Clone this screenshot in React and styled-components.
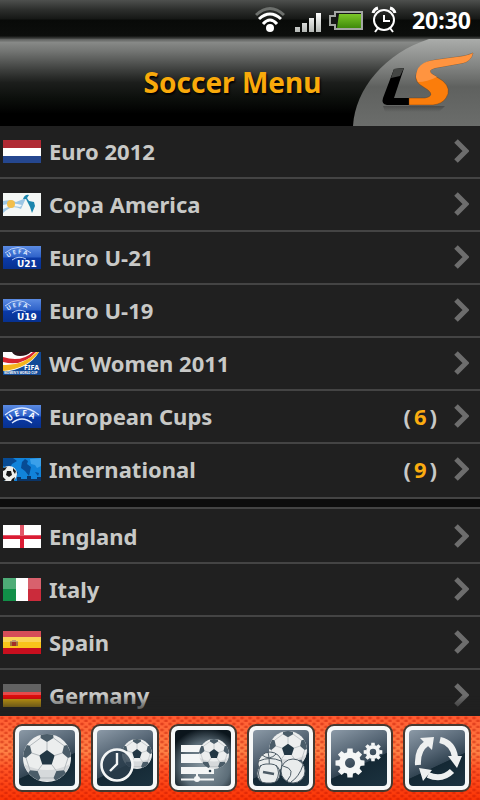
import React from 'react';
import styled, { createGlobalStyle } from 'styled-components';

const GlobalStyle = createGlobalStyle`
  * {
    box-sizing: border-box;
  }

  body {
    margin: 0;
    background: #202020;
    font-family: "Noto Sans", "Open Sans", sans-serif;
    font-weight: 700;
  }
`

const Screen = styled.div`
  display: flex;
  flex-direction: column;
  height: 100vh;
  overflow: hidden;
`

const StatusBar = styled.div`
  flex: none;
  display: flex;
  align-items: center;
  justify-content: flex-end;
  height: 39px;
  padding-right: 9px;
  background: linear-gradient(#4e504e, #2c2e2c 25%, #161816 48%, #080a08 52%, #0c0e0c 92%, #4a4c4a);
  color: white;
  font-size: 23px;
  line-height: 38px;

  svg {
    display: block;
    margin-right: 12px;
  }
`

const Header = styled.header`
  flex: none;
  display: grid;
  grid-template-columns: 112px 1fr 127px;
  align-items: center;
  height: 87px;
  background: linear-gradient(#5c5e5c, #878987 4%, #737573 14%, #3c3e3c 36%, #1c1e1c 50%, #0c0f0c 68%, #000 86%);

  h1 {
    grid-column: 2;
    margin: 0;
    padding-bottom: 2px;
    color: #f9aa0b;
    font-size: 28px;
    line-height: 40px;
    text-align: center;
    white-space: nowrap;
    text-shadow: 1px 2px 2px black;
  }

  svg {
    display: block;
  }
`

const List = styled.main`
  flex: 1;
  min-height: 0;
  overflow-y: auto;
  scrollbar-width: none;
  background: #202020;
  mask-image: linear-gradient(black calc(100% - 20px), transparent);
`

const Section = styled.nav`
  padding: ${ p => p.$second ? '2px 0 0' : '0 0 2px' };
  border-top: ${ p => p.$second ? '2px solid #444' : '0' };
  border-bottom: ${ p => p.$second ? '0' : '2px solid #444' };
`

const Divider = styled.div`
  height: 8px;
  background: #0d0d0d;
`

const Row = styled.a`
  display: flex;
  align-items: center;
  height: 53px;
  padding: 0 11px 0 3px;
  border-bottom: 2px solid #444;
  color: #c8c9c7;
  font-size: 22px;
  line-height: 30px;
  text-decoration: none;

  &:last-child {
    height: 51px;
    border-bottom: 0;
  }

  svg {
    flex: none;
    display: block;
  }
`

const RowLabel = styled.span`
  flex: 1;
  padding: 0 0 2px 8px;
`

const Count = styled.span`
  display: flex;
  gap: 3px;
  margin-right: 16px;
  padding-bottom: 2px;

  b {
    color: #fbac10;
    font-weight: 700;
  }
`

const TabBar = styled.footer`
  flex: none;
  display: grid;
  grid-template-columns: repeat(6, 1fr);
  align-items: center;
  justify-items: center;
  height: 84px;
  padding: 0 4px 0 8px;
  background:
    radial-gradient(ellipse 3px 2px at 2px 2px, rgba(190, 20, 0, .6), transparent) 0 0 / 8px 6px,
    radial-gradient(ellipse 3px 2px at 6px 5px, rgba(190, 20, 0, .6), transparent) 0 0 / 8px 6px,
    linear-gradient(#ff5a30, #ff8246 42%, #ff5526 62%, #fb3405);
`

const TabButton = styled.button`
  width: 68px;
  height: 68px;
  padding: 0;
  overflow: hidden;
  border: 2px solid #46382f;
  border-radius: 9px;
  background: #f6f8f8;

  svg {
    display: block;
    margin: 4px;
    border-radius: 4px;
    background: ${ p => p.$active
      ? 'radial-gradient(circle at 55% 65%, #8b9aa3, #5c6d78 50%, #0b151c 80%)'
      : 'linear-gradient(155deg, #8c9aa7, #566675 38%, #334553 59%, #142834 60%, #1c3340)' };
  }
`

const polar = (r, deg) => {
  const a = deg * Math.PI / 180;
  return [r * Math.cos(a), r * Math.sin(a)].map(n => n.toFixed(2)).join(',');
}

const SoccerBall = ({ x, y, r }) => (
  <g transform={ `translate(${x} ${y}) scale(${r / 24})` }>
    <circle r="24" fill="#eceeee" />
    <path d="M-23,6 A24,24 0 0 0 23,6 Q0,18 -23,6" fill="#d6d9db" />
    { [0, 1, 2, 3, 4].map(k => {
      const a = k * 72 - 90;
      return (
        <g key={ k }>
          <path d={ `M${polar(8, a)} L${polar(16, a)} M${polar(21, a + 18)} L${polar(21, a + 54)}` } stroke="#b4babe" strokeWidth="1" />
          <path d={ `M${polar(16, a)} L${polar(21, a + 18)} L${polar(24, a + 15)} A24,24 0 0 0 ${polar(24, a - 15)} L${polar(21, a - 18)} Z` } fill="#4a5c68" />
        </g>
      )
    }) }
    <polygon points={ [0, 1, 2, 3, 4].map(k => polar(8, k * 72 - 90)).join(' ') } fill="#223744" />
  </g>
)

const Gear = ({ x, y, r }) => (
  <g transform={ `translate(${x} ${y}) scale(${r / 14})` }>
    <circle r="8" fill="none" stroke="#f4f6f6" strokeWidth="6" />
    { [0, 45, 90, 135, 180, 225, 270, 315].map(a => (
      <path key={ a } d="M-3,-10 L-2.6,-14.5 H2.6 L3,-10 Z" fill="#f4f6f6" transform={ `rotate(${a})` } />
    )) }
  </g>
)

const tabs = [
  { name: 'Soccer', art: <SoccerBall x={ 28 } y={ 28 } r={ 24 } /> },
  { name: 'Upcoming', art: <>
    <SoccerBall x={ 40 } y={ 24 } r={ 15 } />
    <circle cx="20" cy="35" r="15.5" fill="#2c3f4d" fillOpacity=".8" stroke="#f4f6f6" strokeWidth="2.6" />
    <path d="M20,23 V34 L13,41" fill="none" stroke="#f4f6f6" strokeWidth="2.4" />
  </> },
  { name: 'Leagues', active: true, art: <>
    <path d="M6,15 H30 V22 H6 Z M6,24 H32 V33 H6 Z M6,37 H39 V44 H6 Z M6,48.5 H39 V50.5 H6 Z M21,44 H23 V47 H21 Z" fill="#f4f6f6" />
    <circle cx="22" cy="49" r="3" fill="#f4f6f6" />
    <SoccerBall x={ 39 } y={ 24 } r={ 15 } />
    <circle cx="35" cy="41" r="1.3" fill="#2c3f4d" />
  </> },
  { name: 'Sports', art: <>
    <SoccerBall x={ 35 } y={ 20 } r={ 19 } />
    <g fill="#e9ecec" stroke="#4c5b65">
      <circle cx="17" cy="34" r="12" />
      <path d="M6,31 Q17,26 28,31 M15,22 Q18,33 14,46 M9,25 Q17,31 23,24" fill="none" />
      <circle cx="40" cy="41" r="12" />
      <path d="M30,36 Q44,39 34,51 M50,35 Q46,47 38,52" fill="none" />
      <rect x="4" y="34" width="23" height="19" rx="9" />
      <path d="M8,35 Q3,43 8,51 M23,35 Q28,43 23,51" fill="none" />
      <path d="M10,42 L21,44" strokeWidth="2.4" />
    </g>
  </> },
  { name: 'Settings', art: <>
    <Gear x={ 19 } y={ 33 } r={ 14 } />
    <Gear x={ 42 } y={ 22 } r={ 9 } />
  </> },
  { name: 'Refresh', art: <>
    <g fill="none" stroke="#eef0f0" strokeWidth="6">
      <path d="M9,35 Q8,20 18,13" />
      <path d="M31,10 Q44,13 46,27" />
      <path d="M43,41 Q33,51 19,45" />
    </g>
    <path d="M11,8 L25,7 L23,20 Z M39,26 L53,26 L48,38 Z M23,40 L10,38 L14,51 Z" fill="#eef0f0" />
  </> },
]

const Gloss = () => <rect width="38" height="11" fill="white" opacity=".26" />

const UefaBack = ({ id }) => <>
  <defs>
    <linearGradient id={ id } x2="0" y2="1">
      <stop offset="0" stopColor="#5b8be2" />
      <stop offset=".48" stopColor="#2e62c9" />
      <stop offset=".52" stopColor="#0b3aa8" />
      <stop offset="1" stopColor="#07318f" />
    </linearGradient>
  </defs>
  <rect width="38" height="23" fill={ `url(#${id})` } />
</>

const UefaSmall = ({ id, text }) => <>
  <UefaBack id={ id } />
  <path d="M2,7 Q15,-4 28,7 M9,14 Q16,9 23,13" fill="none" stroke="#b9cff5" />
  <path id={ `${id}-arc` } d="M5,12 Q15,4 27,11" fill="none" />
  <text fontSize="6" fill="#dce8ff"><textPath href={ `#${id}-arc` }>U E F A</textPath></text>
  <text x="14" y="21" fontSize="9" fontFamily="DejaVu Sans, sans-serif" fill="white">{ text }</text>
</>

const flags = {
  netherlands: <>
    <rect width="38" height="23" fill="white" />
    <rect width="38" height="8" fill="#b02a34" />
    <rect y="16" width="38" height="7" fill="#25478f" />
  </>,
  copa: <>
    <rect width="38" height="23" fill="#f4f7f5" />
    <path d="M0,8 Q8,6 13,9 L23,5 L18,16 Q9,11 0,20 Z" fill="#9cc6e4" />
    <path d="M0,12 Q10,9 19,12 L17,14 Q8,12 0,16 Z" fill="#eef5f8" />
    <circle cx="8" cy="11" r="4" fill="#f3bf4c" />
    <path d="M20,6 Q22,1 26,2 L24,5 L26,8 L31,9 L32,13 L29,20 L27,14 L25,10 L23,6 Z" fill="#1b86ad" />
  </>,
  u21: <UefaSmall id="u21" text="U21" />,
  u19: <UefaSmall id="u19" text="U19" />,
  women: <>
    <rect width="38" height="23" fill="#124a96" />
    <path d="M0,0 H36 Q26,17 0,20 Z" fill="white" />
    <path d="M9,0 H28 Q24,4 17,4 Q11,4 9,0 Z" fill="#28181c" />
    <path d="M0,5 Q18,11 30,0 H33 Q20,15 0,10 Z" fill="#d5252f" />
    <path d="M0,13 Q20,14 34,0 H36 Q24,17 0,19 Z" fill="#f4b51c" />
    <rect y="19" width="38" height="4" fill="#124a96" />
    <text x="21" y="18" fontSize="7" fill="white">FIFA</text>
    <text x="1" y="22" fontSize="3" fill="white">WOMEN'S WORLD CUP</text>
  </>,
  uefa: <>
    <UefaBack id="uefa" />
    <path d="M2,10 Q19,-4 36,10 M9,18 Q19,10 29,18" fill="none" stroke="#dce8ff" strokeWidth="1.3" />
    <path id="uefa-arc" d="M6,17 Q19,4 36,18" fill="none" />
    <text fontSize="8" fill="white"><textPath href="#uefa-arc">U E F A</textPath></text>
  </>,
  world: <>
    <rect width="38" height="23" fill="#1183da" />
    <path d="M0,0 H10 L14,3 L9,6 L7,10 L0,8 Z M19,4 L22,1 L25,3 L24,6 L28,9 L26,18 L22,13 L18,10 Z M10,12 L15,14 L13,20 Z M32,14 L36,15 L35,18 Z" fill="#074b94" />
    <path d="M27,1 L38,0 V8 L34,10 L32,7 L28,6 Z" fill="#3aa0ea" />
    <path d="M14,23 V19 H18 V21 H24 V18 H28 V21 H34 V19 H38 V23 Z" fill="#0b3567" />
    <circle cx="6" cy="16" r="8" fill="#eef0ee" />
    <path d="M4,13 L8,13 L9,17 L6,19 L3,17 Z M0,10 L4,9 L2,12 L0,13 Z M10,10 L13,13 L12,16 L10,13 Z M0,19 L3,22 L0,23 Z M9,21 L12,19 L11,23 H8 Z" fill="#161616" />
  </>,
  england: <>
    <rect width="38" height="23" fill="white" />
    <path d="M17,0 H21 V23 H17 Z M0,10 H38 V14 H0 Z" fill="#da1b33" />
    <Gloss />
  </>,
  italy: <>
    <rect width="38" height="23" fill="white" />
    <rect width="13" height="23" fill="#118f48" />
    <rect x="25" width="13" height="23" fill="#cb2b3b" />
    <Gloss />
  </>,
  spain: <>
    <rect width="38" height="23" fill="#c80f1e" />
    <rect y="6" width="38" height="11" fill="#f8c51a" />
    <path d="M7,10 H9 V9 H13 V10 H15 V15 H7 Z" fill="#a5753a" />
    <rect x="9" y="11" width="4" height="4" fill="#a32f27" />
    <Gloss />
  </>,
  germany: <>
    <rect width="38" height="23" fill="#dd0c0c" />
    <rect width="38" height="8" fill="#2c2c2c" />
    <rect y="15" width="38" height="8" fill="#c89c10" />
    <Gloss />
  </>,
}

const Flag = ({ name }) => (
  <svg width="38" height="23" viewBox="0 0 38 23" aria-hidden="true">{ flags[name] }</svg>
)

const cups = [
  { flag: 'netherlands', label: 'Euro 2012' },
  { flag: 'copa', label: 'Copa America' },
  { flag: 'u21', label: 'Euro U-21' },
  { flag: 'u19', label: 'Euro U-19' },
  { flag: 'women', label: 'WC Women 2011' },
  { flag: 'uefa', label: 'European Cups', count: 6 },
  { flag: 'world', label: 'International', count: 9 },
]

const countries = [
  { flag: 'england', label: 'England' },
  { flag: 'italy', label: 'Italy' },
  { flag: 'spain', label: 'Spain' },
  { flag: 'germany', label: 'Germany' },
]

const MenuRow = ({ flag, label, count }) => (
  <Row href="#">
    <Flag name={ flag } />
    <RowLabel>{ label }</RowLabel>
    { count && <Count><span>(</span><b>{ count }</b><span>)</span></Count> }
    <svg width="16" height="26" viewBox="0 0 16 26" aria-hidden="true">
      <path d="M3,2 L13,12 L3,22" fill="none" stroke="#6d6d6d" strokeWidth="5" />
    </svg>
  </Row>
)

const StatusIcons = () => (
  <svg width="145" height="38" viewBox="0 0 145 38" aria-hidden="true">
    <defs>
      <linearGradient id="battery" x2="0" y2="1">
        <stop offset="0" stopColor="#7cc828" />
        <stop offset="1" stopColor="#3f8a0a" />
      </linearGradient>
      <linearGradient id="signal" x2="0" y2="1">
        <stop offset="0" stopColor="white" />
        <stop offset="1" stopColor="#b4b8b4" />
      </linearGradient>
    </defs>
    <g fill="none" strokeWidth="3">
      <path d="M1,14 Q15,1 29,14" stroke="#6d706d" />
      <path d="M4,18 Q15,8 26,18" stroke="white" />
      <path d="M8,23 Q15,15 22,23" stroke="white" />
    </g>
    <circle cx="15" cy="27" r="4" fill="white" />
    <path d="M40,26 H45 V31 H40 Z M47,22 H52 V31 H47 Z M54,17 H59 V31 H54 Z M61,12 H66 V31 H61 Z" fill="url(#signal)" />
    <path d="M80,11 H107 V28 H80 V24 H75 V15 H80 Z" fill="#141614" stroke="#a3a6a3" strokeWidth="2" />
    <path d="M84,13 H106 V27 H82 Z" fill="url(#battery)" />
    <g fill="none" stroke="white" strokeWidth="2">
      <circle cx="129" cy="19" r="10" />
      <path d="M129,14 V20 H135 M123,27 L120,31 M135,27 L138,31" />
      <path d="M118,12 Q119,8 123,7 M135,7 Q139,8 140,12" strokeWidth="3" />
    </g>
  </svg>
)

const Logo = () => (
  <svg width="127" height="87" viewBox="0 0 127 87" role="img" aria-label="LS">
    <defs>
      <linearGradient id="disc" x2="0" y2="1">
        <stop offset="0" stopColor="#aaacaa" />
        <stop offset=".3" stopColor="#848684" />
        <stop offset=".55" stopColor="#5f615f" />
        <stop offset="1" stopColor="#6b6d6b" />
      </linearGradient>
      <linearGradient id="shade" x2="0" y2="1">
        <stop offset="0" stopColor="#2c2c2c" stopOpacity=".45" />
        <stop offset="1" stopColor="#2c2c2c" stopOpacity="0" />
      </linearGradient>
    </defs>
    <path d="M0,87 C2,50 32,14 76,0 H127 V87 Z" fill="url(#disc)" />
    <path d="M30,67 H92 L86,73 H32 Z" fill="url(#shade)" />
    <path d="M41,30 L51,29 L41,59 H56 V66 H34 Q28,65 30,59 Z" fill="black" />
    <path d="M41,30 L51,29 L47,37 L38,39 Z" fill="#444644" />
    <path d="M56,59 H72 Q82,57 75,51 L66,45 Q61,40 64,33 Q68,23 82,21 L104,18 Q114,17 120,14 Q118,22 110,24 L82,29 Q74,31 79,35 L90,42 Q99,50 93,59 Q89,65 80,66 H56 Z" fill="#fb7d0b" stroke="#5b3a1e" strokeWidth=".4" />
    <path d="M63,38 Q63,23 82,21 L104,18 Q114,17 120,14 Q118,22 110,24 L82,29 Q74,31 79,35 L84,38 Q74,43 65,43 Z" fill="#ff9440" />
  </svg>
)

export default () => (
  <Screen>
    <GlobalStyle />
    <StatusBar>
      <StatusIcons />
      <span>20:30</span>
    </StatusBar>
    <Header>
      <h1>Soccer Menu</h1>
      <Logo />
    </Header>
    <List>
      <Section aria-label="Cups">
        { cups.map(item => <MenuRow key={ item.label } { ...item } />) }
      </Section>
      <Divider />
      <Section $second aria-label="Countries">
        { countries.map(item => <MenuRow key={ item.label } { ...item } />) }
      </Section>
    </List>
    <TabBar>
      { tabs.map(tab => (
        <TabButton key={ tab.name } type="button" aria-label={ tab.name } $active={ tab.active }>
          <svg width="56" height="56" viewBox="0 0 56 56" aria-hidden="true">{ tab.art }</svg>
        </TabButton>
      )) }
    </TabBar>
  </Screen>
)
